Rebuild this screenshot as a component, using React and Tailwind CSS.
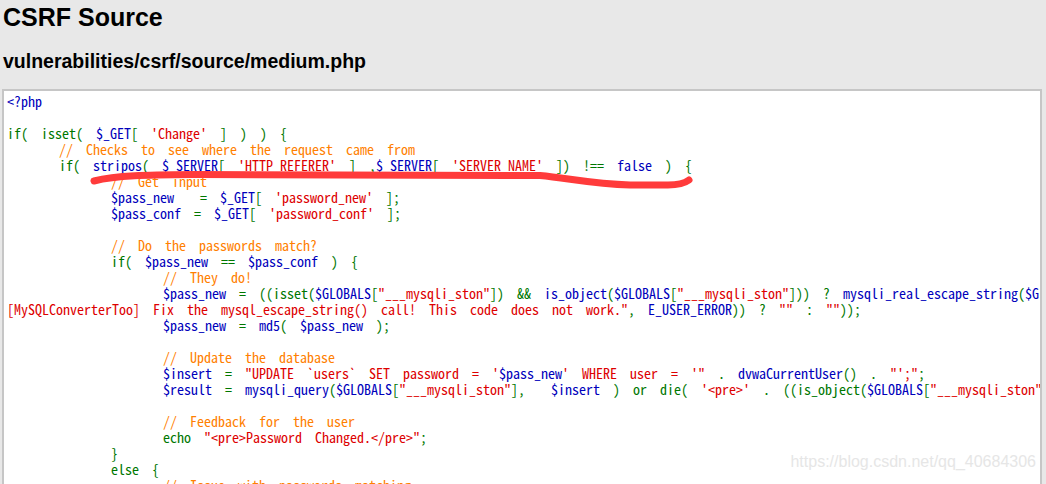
import React from 'react';

const G = 'text-[#007700]';
const B = 'text-[#0000bb]';
const R = 'text-[#dd0000]';
const O = 'text-[#ff8000]';

const T1 = '    ';
const T2 = '        ';
const T3 = '            ';

const LINES = [
    [[B, '<?php']],
    [],
    [[G, 'if( isset( '], [B, '$_GET'], [G, '[ '], [R, "'Change'"], [G, ' ] ) ) {']],
    [[O, T1 + '// Checks to see where the request came from']],
    [[G, T1 + 'if( '], [B, 'stripos'], [G, '( '], [B, '$_SERVER'], [G, '[ '], [R, "'HTTP_REFERER'"], [G, ' ] ,'], [B, '$_SERVER'], [G, '[ '], [R, "'SERVER_NAME'"], [G, ' ]) !== '], [B, 'false'], [G, ' ) {']],
    [[O, T2 + '// Get input']],
    [[B, T2 + '$pass_new'], [G, '  = '], [B, '$_GET'], [G, '[ '], [R, "'password_new'"], [G, ' ];']],
    [[B, T2 + '$pass_conf'], [G, ' = '], [B, '$_GET'], [G, '[ '], [R, "'password_conf'"], [G, ' ];']],
    [],
    [[O, T2 + '// Do the passwords match?']],
    [[G, T2 + 'if( '], [B, '$pass_new'], [G, ' == '], [B, '$pass_conf'], [G, ' ) {']],
    [[O, T3 + '// They do!']],
    [[B, T3 + '$pass_new'], [G, ' = ((isset('], [B, '$GLOBALS'], [G, '['], [R, '"___mysqli_ston"'], [G, ']) && '], [B, 'is_object'], [G, '('], [B, '$GLOBALS'], [G, '['], [R, '"___mysqli_ston"'], [G, '])) ? '], [B, 'mysqli_real_escape_string'], [G, '('], [B, '$GLOBALS'], [G, '['], [R, '"___mysqli_ston"'], [G, '], '], [B, '$pass_new'], [G, ' ) : ((trigger_error('], [R, '"']],
    [[R, '[MySQLConverterToo] Fix the mysql_escape_string() call! This code does not work."'], [G, ', '], [B, 'E_USER_ERROR'], [G, ')) ? '], [R, '""'], [G, ' : '], [R, '""'], [G, '));']],
    [[B, T3 + '$pass_new'], [G, ' = '], [B, 'md5'], [G, '( '], [B, '$pass_new'], [G, ' );']],
    [],
    [[O, T3 + '// Update the database']],
    [[B, T3 + '$insert'], [G, ' = '], [R, '"UPDATE `users` SET password = \''], [B, '$pass_new'], [R, '\' WHERE user = \'"'], [G, ' . '], [B, 'dvwaCurrentUser'], [G, '() . '], [R, '"\';"'], [G, ';']],
    [[B, T3 + '$result'], [G, ' = '], [B, 'mysqli_query'], [G, '('], [B, '$GLOBALS'], [G, '['], [R, '"___mysqli_ston"'], [G, '],  '], [B, '$insert'], [G, ' ) or die( '], [R, "'<pre>'"], [G, ' . ((is_object('], [B, '$GLOBALS'], [G, '['], [R, '"___mysqli_ston"'], [G, '])) ? '], [B, 'mysqli_error'], [G, '('], [B, '$GLOBALS'], [G, '['], [R, '"___mysqli_ston"'], [G, ']) : (('], [B, '$___mysqli_res'], [G, ' = '], [B, 'mysqli_connect_error'], [G, '()) ? '], [B, '$___mysqli_res'], [G, ' : '], [B, 'false'], [G, ')) . '], [R, "'</pre>'"], [G, ' );']],
    [],
    [[O, T3 + '// Feedback for the user']],
    [[G, T3 + 'echo '], [R, '"<pre>Password Changed.</pre>"'], [G, ';']],
    [[G, T2 + '}']],
    [[G, T2 + 'else {']],
    [[O, T3 + '// Issue with passwords matching']],
    [[G, T3 + 'echo '], [R, '"<pre>Passwords did not match.</pre>"'], [G, ';']],
];

const CodeLine = ({ parts }) => (
    <div className="h-4 leading-4 whitespace-pre">
        {parts.length === 0 ? '\u00a0' : parts.map((p, i) => (
            <span key={i} className={p[0]}>{p[1]}</span>
        ))}
    </div>
);

export default function App() {
    return (
        <div className="relative h-[484px] w-full overflow-hidden bg-[#e8e8e8] pl-[2px] pr-[4px] font-['Liberation_Sans',Arial,sans-serif] text-black">
            <h1 className="ml-[1px] text-[25px] font-bold leading-[34px]">CSRF Source</h1>
            <h2 className="ml-[1px] mt-[15px] text-[19.5px] font-bold leading-[24px]">vulnerabilities/csrf/source/medium.php</h2>
            <div className="mt-[16px] overflow-hidden border-2 border-[#c6c6c6] bg-white pl-[3px] pt-[2px] font-['Noto_Sans_Mono_CJK_SC','Liberation_Mono',monospace] text-[14px] [word-spacing:6px]">
                {LINES.map((parts, i) => <CodeLine key={i} parts={parts} />)}
            </div>

            {/* red hand-drawn underline */}
            <svg className="pointer-events-none absolute left-0 top-0" width="1046" height="484" viewBox="0 0 1046 484">
                <path
                    d="M94 181 C 118 175, 150 175, 200 174.5 L 540 175.5 C 568 178, 592 184, 630 185 L 668 185 C 680 185, 685 183, 689 180"
                    fill="none"
                    stroke="#ff3b3b"
                    strokeWidth="7"
                    strokeLinecap="round"
                    strokeLinejoin="round"
                />
            </svg>

            <div className="pointer-events-none absolute right-[10px] top-[453px] text-[16px] leading-[18px] text-[#e6e6e6]">
                https://blog.csdn.net/qq_40684306
            </div>
        </div>
    );
}
